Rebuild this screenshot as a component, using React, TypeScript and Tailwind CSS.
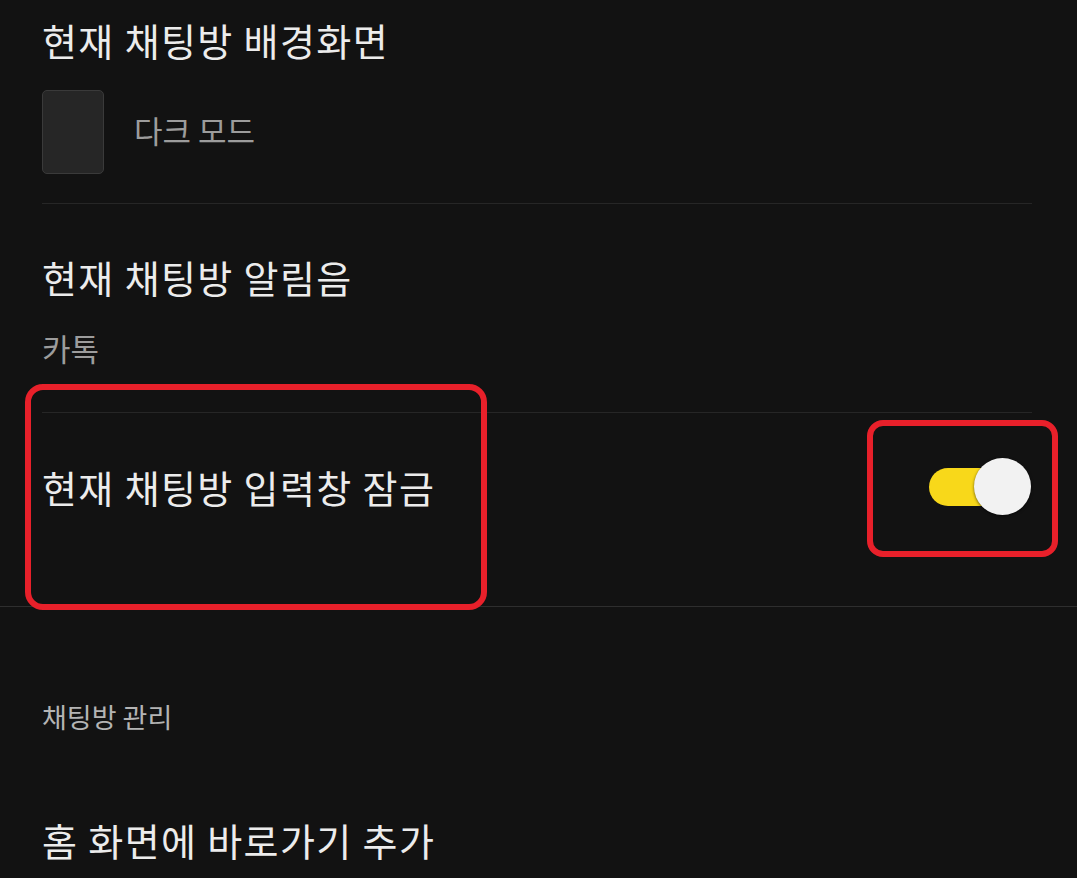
function Toggle() {
  return (
    <div className="relative flex h-[58px] w-[102px] items-center">
      <div className="h-[38px] w-[72px] rounded-full bg-[#f8d81a]" />
      <div className="absolute right-0 top-0 h-[57px] w-[57px] rounded-full bg-[#f2f2f2] shadow-[0_1px_3px_rgba(0,0,0,0.6)]" />
    </div>
  );
}

function App() {
  return (
    <div
      className="relative min-h-screen w-full overflow-hidden bg-[#121212]"
      style={{ fontFamily: '"Noto Sans CJK KR", "Noto Sans", sans-serif' }}
    >
      <div className="px-[42px]">
        <div className="pt-[17px] text-[38px] leading-[46px] tracking-[1.4px] text-[#ececec]">
          현재 채팅방 배경화면
        </div>
        <div className="mt-[27px] flex items-center gap-[30px]">
          <div className="h-[84px] w-[62px] rounded-[5px] border border-[#3a3a3a] bg-[#262626]" />
          <div className="-mt-1 text-[31px] leading-[40px] text-[#9c9c9c]">다크 모드</div>
        </div>
        <div className="mt-[29px] h-px w-[990px] bg-[#262626]" />

        <div className="mt-[50px] text-[38px] leading-[46px] tracking-[1.4px] text-[#ececec]">
          현재 채팅방 알림음
        </div>
        <div className="mt-[28px] text-[31px] leading-[40px] text-[#9c9c9c]">카톡</div>
        <div className="mt-[44px] h-px w-[990px] bg-[#262626]" />

        <div className="flex h-[148px] items-center justify-between">
          <div className="text-[38px] leading-[46px] tracking-[1.4px] text-[#ececec]">
            현재 채팅방 입력창 잠금
          </div>
          <div className="mr-[4px]">
            <Toggle />
          </div>
        </div>
      </div>
      <div className="mt-[45px] h-px w-full bg-[#2e2e2e]" />

      <div className="px-[42px]">
        <div className="mt-[95px] text-[27px] leading-[30px] text-[#b4b4b4]">채팅방 관리</div>
        <div className="mt-[85px] text-[38px] leading-[46px] tracking-[1.4px] text-[#ececec]">
          홈 화면에 바로가기 추가
        </div>
      </div>

      <div className="pointer-events-none absolute left-[25px] top-[384px] h-[226px] w-[462px] rounded-[18px] border-[6px] border-[#e8202a]" />
      <div className="pointer-events-none absolute left-[867px] top-[420px] h-[137px] w-[191px] rounded-[16px] border-[6px] border-[#e8202a]" />
    </div>
  );
}

export default App;
